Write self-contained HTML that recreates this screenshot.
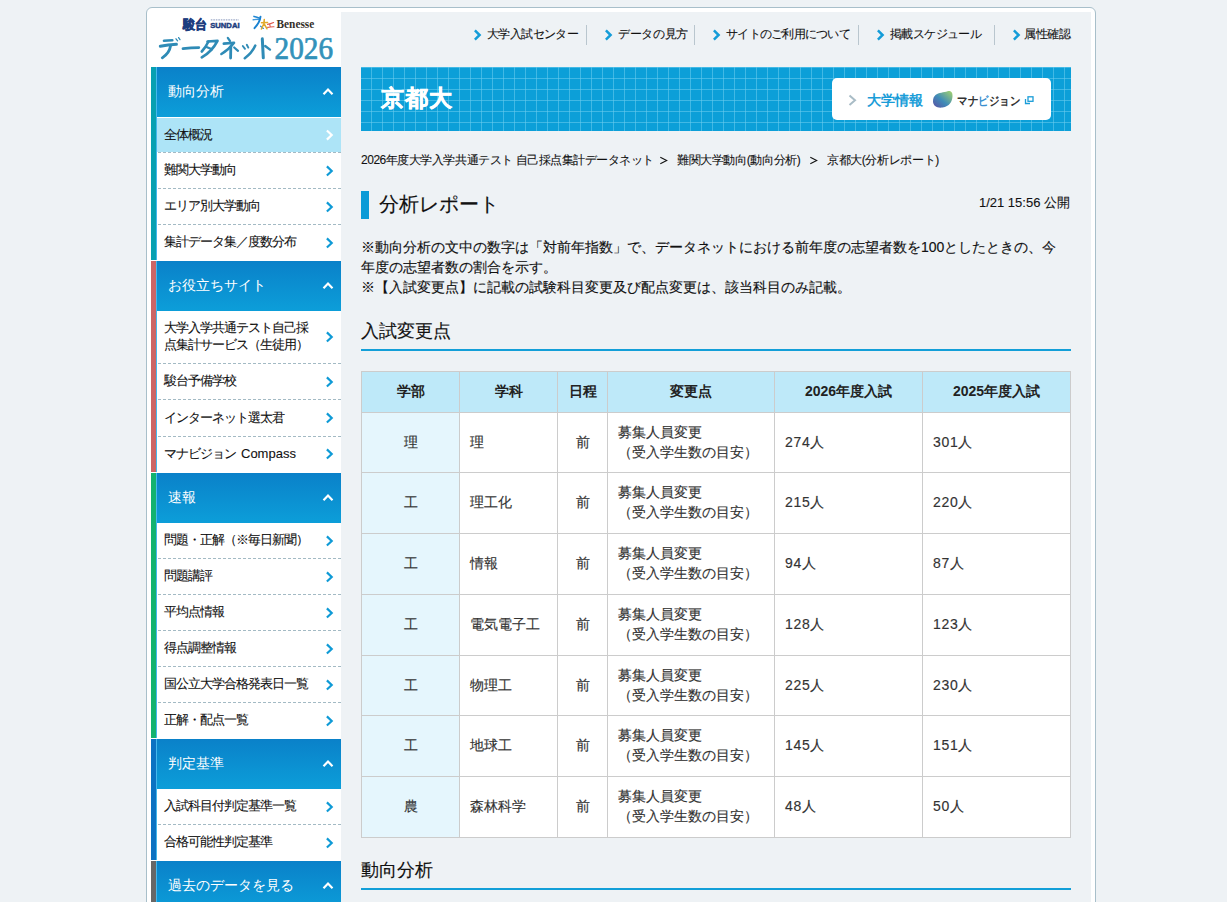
<!DOCTYPE html>
<html lang="ja">
<head>
<meta charset="utf-8">
<style>
*{margin:0;padding:0;box-sizing:border-box}
html,body{width:1227px;height:902px;overflow:hidden}
body{background:#eef2f5;font-family:"Liberation Sans",sans-serif;color:#111;position:relative}
svg{position:absolute;overflow:visible}
#wrap{position:absolute;left:146px;top:7px;width:950px;height:1000px;border:1px solid #a8bfca;border-radius:6px;background:#fff}
#graybg{position:absolute;left:341px;top:12px;width:750px;height:900px;background:#eef2f5}
#logo{position:absolute;left:151px;top:12px;width:190px;height:55px;background:#fff}
.nav{position:absolute;top:24px;height:20px;font-size:12px;line-height:20px;color:#111;white-space:nowrap}
.sep{position:absolute;top:25px;width:1px;height:20px;background:#b9c6ce}
.strip{position:absolute;left:151px;width:5px}
.lline{position:absolute;left:156px;width:1px;background:#45b8ec}
.sh{position:absolute;left:157px;width:184px;height:50px;background:linear-gradient(#0a81c9,#0c9ed9);color:#fff;font-size:14px;line-height:48px;padding-left:11px;white-space:nowrap}
.it{position:absolute;left:157px;width:184px;background:#fff;font-size:13px;letter-spacing:-1px;color:#111;padding-left:7px;padding-bottom:2px;display:flex;align-items:center;line-height:17px;white-space:nowrap}
.it.act{background:#ade4f7}
.dash{position:absolute;left:157px;width:184px;height:1px;background:repeating-linear-gradient(90deg,#a3bac4 0 3px,transparent 3px 5px);background-position:1px 0}
#banner{position:absolute;left:361px;top:67px;width:710px;height:64px;background-color:#0c9fd8;
background-image:linear-gradient(90deg,rgba(110,205,240,.55) 1px,transparent 1px),linear-gradient(rgba(110,205,240,.55) 1px,transparent 1px);
background-size:11px 11px;background-position:10px 11px}
#banner h1{position:absolute;left:20px;top:0;line-height:62px;font-size:23px;color:#fff;font-weight:bold;letter-spacing:.8px;-webkit-text-stroke:.5px #fff}
#mvbtn{position:absolute;left:832px;top:78px;width:219px;height:42px;background:#fff;border-radius:5px}
.crumb{position:absolute;top:150px;font-size:12px;letter-spacing:-.38px;line-height:20px;white-space:nowrap;color:#111}
#ttlbar{position:absolute;left:361px;top:191px;width:8px;height:28px;background:#0b9bd7}
#ttl{position:absolute;left:379px;top:189px;font-size:20px;line-height:30px;color:#111;white-space:nowrap}
#date{position:absolute;right:157px;top:193px;font-size:13px;line-height:20px;color:#111;white-space:nowrap}
#intro{position:absolute;left:361px;top:237px;font-size:14px;line-height:20px;color:#111;white-space:nowrap}
.h2{position:absolute;left:361px;width:710px;font-size:18px;line-height:26px;color:#111;white-space:nowrap}
.h2u{position:absolute;left:361px;width:710px;height:2px;background:#129fd8}
table{position:absolute;left:361px;top:371px;width:710px;border-collapse:collapse;table-layout:fixed}
td,th{border:1px solid #cccccc;font-size:14px;color:#333;line-height:20px;padding:0 10px 2px;background:#fff;text-align:left}
th{background:#bee9f9;font-weight:bold;text-align:center;height:41px;color:#222;padding-bottom:2px}
td.c1{background:#e5f6fd;text-align:center}
td.cc{text-align:center}
td.n{letter-spacing:.7px}
.it,.nav,.crumb,#date{-webkit-text-stroke:.1px currentColor}
#intro,#ttl,.h2,td{-webkit-text-stroke:.15px currentColor}
</style>
</head>
<body>
<div id="wrap"></div>
<div id="graybg"></div>
<div id="logo"></div>

<!-- LOGO -->
<svg style="left:0;top:0" width="1" height="1">
 <text x="182.5" y="28.5" font-family="Liberation Sans" font-weight="bold" font-size="13" fill="#1d3d7e" stroke="#1d3d7e" stroke-width=".6" textLength="24" lengthAdjust="spacingAndGlyphs">駿台</text>
 <line x1="210.8" y1="19.8" x2="238.8" y2="19.8" stroke="#9eabc8" stroke-width="1.3" stroke-dasharray="1.6 .9"/>
 <text x="210.2" y="28" font-family="Liberation Sans" font-weight="bold" font-size="7.4" fill="#1d3d7e" stroke="#1d3d7e" stroke-width=".45" textLength="29.4" lengthAdjust="spacingAndGlyphs">SUNDAI</text>
 <g fill="none" stroke-linecap="round" stroke-linejoin="round">
  <path d="M254 16.4 Q257 17.2 259.6 18.2" stroke="#1f86d2" stroke-width="1.6"/>
  <path d="M253.2 19.8 Q256.5 19.2 259.2 19.3" stroke="#3f98da" stroke-width="1.4"/>
  <path d="M260.5 16.6 Q260 22 254.5 28.2" stroke="#1a82d0" stroke-width="1.9"/>
  <path d="M260.6 26.2 L263.4 28.4" stroke="#2a8cd6" stroke-width="1.3"/>
  <path d="M264.3 19.4 L263.9 23.5 L261.4 29 M263.9 23.5 L267 28.8 M261.5 22.8 L267.6 22.4" stroke="#e2a92a" stroke-width="1.5"/>
  <path d="M267.5 24.4 Q270.5 24 273.6 22.6 M267.6 27.4 Q271 26.6 274 26.7 M269.6 23.9 L270.3 27" stroke="#de5a4c" stroke-width="1.1"/>
 </g>
 <text x="276.5" y="28" font-family="Liberation Serif" font-weight="bold" font-size="11.5" fill="#35302a" textLength="37.8" lengthAdjust="spacingAndGlyphs">Benesse</text>
 <defs><linearGradient id="lg" x1="0" y1="0" x2="1" y2="0"><stop offset="0" stop-color="#2b84b0"/><stop offset="1" stop-color="#3c9cc0"/></linearGradient></defs>
 <g fill="none" stroke="#2f8bb6" stroke-linecap="round" stroke-linejoin="round">
  <path d="M164 40.8 Q168 40.3 172.3 40.2" stroke-width="2.6"/>
  <path d="M160.3 46.3 Q168 45 176.4 44.3" stroke-width="3"/>
  <path d="M170.5 46 Q169.5 53 162.3 57.8" stroke-width="2.8"/>
  <path d="M176 38.8 L177.6 40.8 M178.6 37.6 L180 39.6" stroke-width="1.3"/>
  <path d="M183 48.6 Q191 47.6 198.8 47.6" stroke-width="2.8"/>
  <path d="M208.5 41.5 Q205.5 47.5 201.8 51.5" stroke-width="2.6"/>
  <path d="M207.5 41.5 L217.5 40.8 Q212 51.5 201.8 57.4" stroke-width="2.7"/>
  <path d="M206.5 47 L212 49.3" stroke-width="2.2"/>
  <path d="M227.8 37.9 L230 41" stroke-width="2.2"/>
  <path d="M223.8 43.6 L234 42.8 Q229 49.5 221.4 54" stroke-width="2.6"/>
  <path d="M230.8 47 L230.6 58" stroke-width="2.8"/>
  <path d="M234.2 47.5 L238 50.8" stroke-width="2.2"/>
  <path d="M242.8 46 L245 48.8 M246.8 44.8 L248.3 47.6" stroke-width="1.9"/>
  <path d="M255.3 45.6 Q252 53 244.8 58.2" stroke-width="2.5"/>
  <path d="M262.3 38.8 L263.3 57.8" stroke-width="3"/>
  <path d="M265.2 46 L270 49.6" stroke-width="2.4"/>
 </g>
 <text x="274.5" y="58.5" font-family="Liberation Serif" font-size="31" fill="#3392ba" stroke="#3392ba" stroke-width=".7" textLength="58.5" lengthAdjust="spacingAndGlyphs">2026</text>
</svg>

<!-- top nav -->
<svg style="left:0;top:0" width="1" height="1"><g stroke="#139cd8" stroke-width="2.5" fill="none">
 <polyline points="474.9,30.3 479.6,35 474.9,39.6"/>
 <polyline points="605.9,30.3 610.6,35 605.9,39.6"/>
 <polyline points="713.9,30.3 718.6,35 713.9,39.6"/>
 <polyline points="877.9,30.3 882.6,35 877.9,39.6"/>
 <polyline points="1013.9,30.3 1018.6,35 1013.9,39.6"/>
</g></svg>
<div class="nav" style="left:487px;letter-spacing:-.62px">大学入試センター</div>
<div class="sep" style="left:586px"></div>
<div class="nav" style="left:618px;letter-spacing:-.35px">データの見方</div>
<div class="sep" style="left:694px"></div>
<div class="nav" style="left:726px;letter-spacing:-.75px">サイトのご利用について</div>
<div class="sep" style="left:858px"></div>
<div class="nav" style="left:890px;letter-spacing:-.6px">掲載スケジュール</div>
<div class="sep" style="left:994px"></div>
<div class="nav" style="left:1024px;letter-spacing:-.3px">属性確認</div>

<!-- sidebar -->
<div class="strip" style="top:67px;height:193px;background:#07a0b1"></div>
<div class="strip" style="top:261px;height:211px;background:#cc6566"></div>
<div class="strip" style="top:473px;height:265px;background:#13b26f"></div>
<div class="strip" style="top:739px;height:121px;background:#0b72c2"></div>
<div class="strip" style="top:861px;height:60px;background:#676767"></div>
<div class="lline" style="top:67px;height:193px"></div>
<div class="lline" style="top:261px;height:211px"></div>
<div class="lline" style="top:473px;height:265px"></div>
<div class="lline" style="top:739px;height:121px"></div>
<div class="lline" style="top:861px;height:60px"></div>

<div class="sh" style="top:67px">動向分析</div>
<div class="it act" style="top:118px;height:34px">全体概況</div>
<div class="dash" style="top:152px"></div>
<div class="it" style="top:153px;height:35px">難関大学動向</div>
<div class="dash" style="top:188px"></div>
<div class="it" style="top:189px;height:35px">エリア別大学動向</div>
<div class="dash" style="top:224px"></div>
<div class="it" style="top:225px;height:35px">集計データ集／度数分布</div>

<div class="sh" style="top:261px">お役立ちサイト</div>
<div class="it" style="top:311px;height:52px">大学入学共通テスト自己採<br>点集計サービス（生徒用）</div>
<div class="dash" style="top:363px"></div>
<div class="it" style="top:364px;height:35px">駿台予備学校</div>
<div class="dash" style="top:399px"></div>
<div class="it" style="top:400px;height:36px">インターネット選太君</div>
<div class="dash" style="top:436px"></div>
<div class="it" style="top:437px;height:35px">マナビジョン<span style="letter-spacing:0;font-size:13px;margin-left:5px">Compass</span></div>

<div class="sh" style="top:473px">速報</div>
<div class="it" style="top:523px;height:35px">問題・正解（※毎日新聞）</div>
<div class="dash" style="top:558px"></div>
<div class="it" style="top:559px;height:35px">問題講評</div>
<div class="dash" style="top:594px"></div>
<div class="it" style="top:595px;height:35px">平均点情報</div>
<div class="dash" style="top:630px"></div>
<div class="it" style="top:631px;height:35px">得点調整情報</div>
<div class="dash" style="top:666px"></div>
<div class="it" style="top:667px;height:35px">国公立大学合格発表日一覧</div>
<div class="dash" style="top:702px"></div>
<div class="it" style="top:703px;height:35px">正解・配点一覧</div>

<div class="sh" style="top:739px">判定基準</div>
<div class="it" style="top:789px;height:35px">入試科目付判定基準一覧</div>
<div class="dash" style="top:824px"></div>
<div class="it" style="top:825px;height:35px">合格可能性判定基準</div>

<div class="sh" style="top:861px">過去のデータを見る</div>

<!-- sidebar chevrons -->
<svg style="left:0;top:0" width="1" height="1">
 <g stroke="#fff" stroke-width="2.2" fill="none">
  <polyline points="323.5,94.2 328,89.5 332.5,94.2"/>
  <polyline points="323.5,288.2 328,283.5 332.5,288.2"/>
  <polyline points="323.5,500.2 328,495.5 332.5,500.2"/>
  <polyline points="323.5,766.2 328,761.5 332.5,766.2"/>
  <polyline points="323.5,888.2 328,883.5 332.5,888.2"/>
  <polyline points="326.9,130.5 331.7,135 326.9,139.6"/>
 </g>
 <g stroke="#0e9ad6" stroke-width="2.2" fill="none">
  <polyline points="326.9,166.4 331.7,171 326.9,175.5"/>
  <polyline points="326.9,202.4 331.7,207 326.9,211.5"/>
  <polyline points="326.9,238.4 331.7,243 326.9,247.5"/>
  <polyline points="326.9,332.4 331.7,337 326.9,341.5"/>
  <polyline points="326.9,377.4 331.7,382 326.9,386.5"/>
  <polyline points="326.9,413.4 331.7,418 326.9,422.5"/>
  <polyline points="326.9,449.4 331.7,454 326.9,458.5"/>
  <polyline points="326.9,536.4 331.7,541 326.9,545.5"/>
  <polyline points="326.9,572.4 331.7,577 326.9,581.5"/>
  <polyline points="326.9,608.4 331.7,613 326.9,617.5"/>
  <polyline points="326.9,644.4 331.7,649 326.9,653.5"/>
  <polyline points="326.9,680.4 331.7,685 326.9,689.5"/>
  <polyline points="326.9,716.4 331.7,721 326.9,725.5"/>
  <polyline points="326.9,802.4 331.7,807 326.9,811.5"/>
  <polyline points="326.9,838.4 331.7,843 326.9,847.5"/>
 </g>
</svg>

<!-- main -->
<div id="banner"><h1>京都大</h1></div>
<div id="mvbtn"></div>
<svg style="left:0;top:0" width="1" height="1">
 <polyline points="849.5,95.5 855,100.3 849.5,105" stroke="#a9bcc6" stroke-width="2" fill="none"/>
 <text x="866.5" y="104.8" font-family="Liberation Sans" font-weight="bold" font-size="14" fill="#1a9dd8" textLength="56.5" lengthAdjust="spacingAndGlyphs">大学情報</text>
 <defs><linearGradient id="bl" x1="0" y1="1" x2="1" y2="0"><stop offset="0" stop-color="#5b4fa3"/><stop offset=".45" stop-color="#3f8cb8"/><stop offset="1" stop-color="#a9d66a"/></linearGradient></defs>
 <path d="M935.5 95 C938.5 92.5 944 92.5 947.5 91.2 C951 90 952.8 92.5 952.5 96.5 C952.2 101.5 949.5 106.5 942.5 107.5 C937 108.2 933.2 106 933 101.5 C932.9 98.5 934 96.3 935.5 95 Z" fill="url(#bl)"/>
 <text x="957" y="105.3" font-family="Liberation Sans" font-weight="bold" font-size="12" fill="#333" textLength="63" lengthAdjust="spacingAndGlyphs">マナ<tspan fill="#3a8fd0">ビ</tspan>ジョン</text>
 <g stroke="#1a9dd8" stroke-width="1.3" fill="none"><rect x="1028" y="96.8" width="5" height="4.5"/><polyline points="1025.5,99 1025.5,103.5 1030,103.5"/></g>
</svg>

<div class="crumb" style="left:361px;letter-spacing:-.47px">2026年度大学入学共通テスト 自己採点集計データネット</div>

<div class="crumb" style="left:677px">難関大学動向(動向分析)</div>
<svg style="left:0;top:0" width="1" height="1"><g stroke="#111" stroke-width="1.1" fill="none"><polyline points="660.3,157.3 666.7,160.5 660.3,163.7"/><polyline points="810.3,157.3 816.7,160.5 810.3,163.7"/></g></svg>
<div class="crumb" style="left:827px">京都大(分析レポート)</div>
<div id="ttlbar"></div>
<div id="ttl">分析レポート</div>
<div id="date">1/21 15:56 公開</div>
<div id="intro">※動向分析の文中の数字は「対前年指数」で、データネットにおける前年度の志望者数を100としたときの、今<br>年度の志望者数の割合を示す。<br>※【入試変更点】に記載の試験科目変更及び配点変更は、該当科目のみ記載。</div>

<div class="h2" style="top:318px">入試変更点</div>
<div class="h2u" style="top:349px"></div>

<table>
<colgroup><col style="width:98px"><col style="width:98px"><col style="width:50px"><col style="width:167px"><col style="width:148px"><col style="width:148px"></colgroup>
<tr><th>学部</th><th>学科</th><th>日程</th><th>変更点</th><th>2026年度入試</th><th>2025年度入試</th></tr>
<tr style="height:60px"><td class="c1">理</td><td>理</td><td class="cc">前</td><td>募集人員変更<br>（受入学生数の目安）</td><td class="n">274人</td><td class="n">301人</td></tr>
<tr style="height:61px"><td class="c1">工</td><td>理工化</td><td class="cc">前</td><td>募集人員変更<br>（受入学生数の目安）</td><td class="n">215人</td><td class="n">220人</td></tr>
<tr style="height:61px"><td class="c1">工</td><td>情報</td><td class="cc">前</td><td>募集人員変更<br>（受入学生数の目安）</td><td class="n">94人</td><td class="n">87人</td></tr>
<tr style="height:61px"><td class="c1">工</td><td>電気電子工</td><td class="cc">前</td><td>募集人員変更<br>（受入学生数の目安）</td><td class="n">128人</td><td class="n">123人</td></tr>
<tr style="height:60px"><td class="c1">工</td><td>物理工</td><td class="cc">前</td><td>募集人員変更<br>（受入学生数の目安）</td><td class="n">225人</td><td class="n">230人</td></tr>
<tr style="height:61px"><td class="c1">工</td><td>地球工</td><td class="cc">前</td><td>募集人員変更<br>（受入学生数の目安）</td><td class="n">145人</td><td class="n">151人</td></tr>
<tr style="height:61px"><td class="c1">農</td><td>森林科学</td><td class="cc">前</td><td>募集人員変更<br>（受入学生数の目安）</td><td class="n">48人</td><td class="n">50人</td></tr>
</table>

<div class="h2" style="top:857px">動向分析</div>
<div class="h2u" style="top:888px"></div>
</body>
</html>
